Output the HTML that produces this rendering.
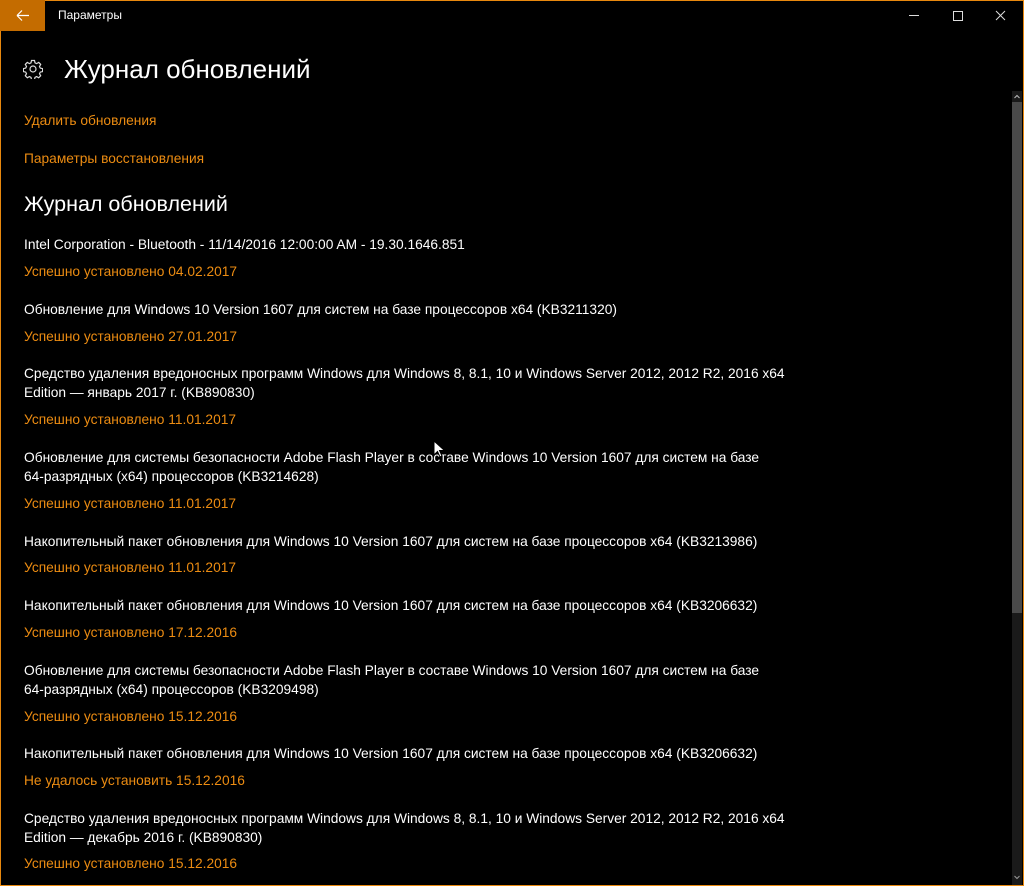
<!DOCTYPE html>
<html><head><meta charset="utf-8"><style>
html,body{margin:0;padding:0;background:#000;width:1024px;height:886px;overflow:hidden}
body{position:relative;font-family:"Liberation Sans",sans-serif;color:#fff}
.frame{position:absolute;left:0;top:0;width:1022px;height:884px;border:1px solid #e8880e}
.t{position:absolute;left:24px;white-space:nowrap;font-size:13.75px;line-height:19px}
.o{color:#ec8c12}
.back{position:absolute;left:0;top:0;width:45px;height:31px;background:#c46c00}
.sb{position:absolute;left:1012px;top:91px;width:10px;height:794px;background:#1a1a1a}
.thumb{position:absolute;left:1012px;top:102px;width:10px;height:511px;background:#4a4a4a}
</style></head><body>
<div class="frame"></div>
<div class="back"><svg width="45" height="31"><path d="M17 15.5h12M17 15.5l5-5M17 15.5l5 5" stroke="#fff" stroke-width="1.2" fill="none"/></svg></div>
<div style="position:absolute;left:58px;top:8px;font-size:12px">Параметры</div>
<svg style="position:absolute;left:900px;top:8px" width="120" height="16">
<path d="M9 7.5h10" stroke="#ddd" stroke-width="1"/>
<rect x="53.5" y="3.5" width="9" height="9" stroke="#ddd" fill="none"/>
<path d="M96 3l9 9M105 3l-9 9" stroke="#ddd" stroke-width="1"/>
</svg>
<svg style="position:absolute;left:23px;top:59px" width="20" height="20" viewBox="0 0 20 20"><g fill="none" stroke="#ddd" stroke-width="1.2"><circle cx="10" cy="10" r="3"/><path d="M8.5 1.5h3l.5 2.3 1.6.8 2.1-1.2 2 2-1.2 2.1.8 1.6 2.3.5v3l-2.3.5-.8 1.6 1.2 2.1-2 2-2.1-1.2-1.6.8-.5 2.3h-3l-.5-2.3-1.6-.8-2.1 1.2-2-2 1.2-2.1-.8-1.6-2.3-.5v-3l2.3-.5.8-1.6-1.2-2.1 2-2 2.1 1.2 1.6-.8z"/></g></svg>
<div style="position:absolute;left:64px;top:53px;font-size:26px;line-height:32px">Журнал обновлений</div>
<div class="t o" style="top:111px">Удалить обновления</div>
<div class="t o" style="top:149px">Параметры восстановления</div>
<div style="position:absolute;left:24px;top:191px;font-size:21.5px;line-height:26px">Журнал обновлений</div>
<div class="t" style="top:235px">Intel Corporation - Bluetooth - 11/14/2016 12:00:00 AM - 19.30.1646.851</div>
<div class="t o" style="top:262px">Успешно установлено 04.02.2017</div>
<div class="t" style="top:300px">Обновление для Windows 10 Version 1607 для систем на базе процессоров x64 (KB3211320)</div>
<div class="t o" style="top:327px">Успешно установлено 27.01.2017</div>
<div class="t" style="top:364px">Средство удаления вредоносных программ Windows для Windows 8, 8.1, 10 и Windows Server 2012, 2012 R2, 2016 x64<br>Edition — январь 2017 г. (KB890830)</div>
<div class="t o" style="top:410px">Успешно установлено 11.01.2017</div>
<div class="t" style="top:448px">Обновление для системы безопасности Adobe Flash Player в составе Windows 10 Version 1607 для систем на базе<br>64-разрядных (x64) процессоров (KB3214628)</div>
<div class="t o" style="top:494px">Успешно установлено 11.01.2017</div>
<div class="t" style="top:532px">Накопительный пакет обновления для Windows 10 Version 1607 для систем на базе процессоров x64 (KB3213986)</div>
<div class="t o" style="top:558px">Успешно установлено 11.01.2017</div>
<div class="t" style="top:596px">Накопительный пакет обновления для Windows 10 Version 1607 для систем на базе процессоров x64 (KB3206632)</div>
<div class="t o" style="top:623px">Успешно установлено 17.12.2016</div>
<div class="t" style="top:661px">Обновление для системы безопасности Adobe Flash Player в составе Windows 10 Version 1607 для систем на базе<br>64-разрядных (x64) процессоров (KB3209498)</div>
<div class="t o" style="top:707px">Успешно установлено 15.12.2016</div>
<div class="t" style="top:744px">Накопительный пакет обновления для Windows 10 Version 1607 для систем на базе процессоров x64 (KB3206632)</div>
<div class="t o" style="top:771px">Не удалось установить 15.12.2016</div>
<div class="t" style="top:809px">Средство удаления вредоносных программ Windows для Windows 8, 8.1, 10 и Windows Server 2012, 2012 R2, 2016 x64<br>Edition — декабрь 2016 г. (KB890830)</div>
<div class="t o" style="top:854px">Успешно установлено 15.12.2016</div>
<div class="sb"></div><div class="thumb"></div>
<svg style="position:absolute;left:1012px;top:91px" width="10" height="11"><path d="M2.5 7l2.5-2.5 2.5 2.5" stroke="#bbb" fill="none"/></svg>
<svg style="position:absolute;left:1012px;top:872px" width="10" height="11"><path d="M2.5 4l2.5 2.5 2.5-2.5" stroke="#999" fill="none"/></svg>
<svg style="position:absolute;left:433px;top:440px" width="12" height="18"><path d="M1 1v14l3.5-3.5 2.5 5.5 2-1-2.5-5.5h5z" fill="#fff" stroke="#000" stroke-width="1"/></svg>
</body></html>
